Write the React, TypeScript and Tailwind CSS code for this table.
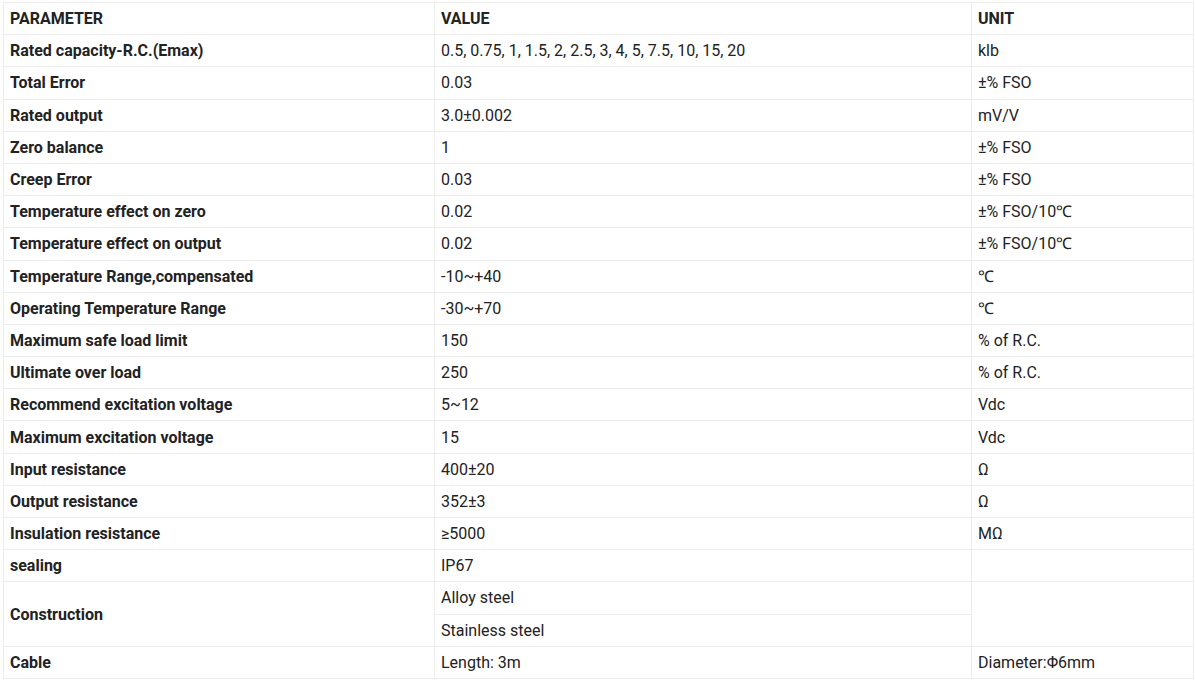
import React from "react";

type Row = { p: string; v: string; u: string };

const rows: Row[] = [
  { p: "Rated capacity-R.C.(Emax)", v: "0.5, 0.75, 1, 1.5, 2, 2.5, 3, 4, 5, 7.5, 10, 15, 20", u: "klb" },
  { p: "Total Error", v: "0.03", u: "±% FSO" },
  { p: "Rated output", v: "3.0±0.002", u: "mV/V" },
  { p: "Zero balance", v: "1", u: "±% FSO" },
  { p: "Creep Error", v: "0.03", u: "±% FSO" },
  { p: "Temperature effect on zero", v: "0.02", u: "±% FSO/10℃" },
  { p: "Temperature effect on output", v: "0.02", u: "±% FSO/10℃" },
  { p: "Temperature Range,compensated", v: "-10~+40", u: "℃" },
  { p: "Operating Temperature Range", v: "-30~+70", u: "℃" },
  { p: "Maximum safe load limit", v: "150", u: "% of R.C." },
  { p: "Ultimate over load", v: "250", u: "% of R.C." },
  { p: "Recommend excitation voltage", v: "5~12", u: "Vdc" },
  { p: "Maximum excitation voltage", v: "15", u: "Vdc" },
  { p: "Input resistance", v: "400±20", u: "Ω" },
  { p: "Output resistance", v: "352±3", u: "Ω" },
  { p: "Insulation resistance", v: "≥5000", u: "MΩ" },
  { p: "sealing", v: "IP67", u: "" },
];

const cell = "border border-[#ececec] px-[6px] h-[32.2px] pt-[1px] pb-0 align-middle text-left leading-[20px]";

export default function App() {
  return (
    <div className="bg-white w-[1195px] h-[683px] pt-[2px] pl-[3px]" style={{ fontFamily: "Roboto, 'Liberation Sans', sans-serif" }}>
      <table className="border-collapse w-[1190px] text-[16px] text-[#222] table-fixed">
        <colgroup>
          <col className="w-[431px]" />
          <col className="w-[537px]" />
          <col className="w-[222px]" />
        </colgroup>
        <tbody>
          <tr className="font-bold">
            <td className={cell}>PARAMETER</td>
            <td className={cell}>VALUE</td>
            <td className={cell}>UNIT</td>
          </tr>
          {rows.map((r) => (
            <tr key={r.p}>
              <td className={cell + " font-bold"}>{r.p}</td>
              <td className={cell}>{r.v}</td>
              <td className={cell}>{r.u}</td>
            </tr>
          ))}
          <tr>
            <td className={cell + " font-bold"} rowSpan={2}>Construction</td>
            <td className={cell}>Alloy steel</td>
            <td className={cell} rowSpan={2}></td>
          </tr>
          <tr>
            <td className={cell}>Stainless steel</td>
          </tr>
          <tr>
            <td className={cell + " font-bold"}>Cable</td>
            <td className={cell}>Length: 3m</td>
            <td className={cell}>Diameter:Φ6mm</td>
          </tr>
        </tbody>
      </table>
    </div>
  );
}
